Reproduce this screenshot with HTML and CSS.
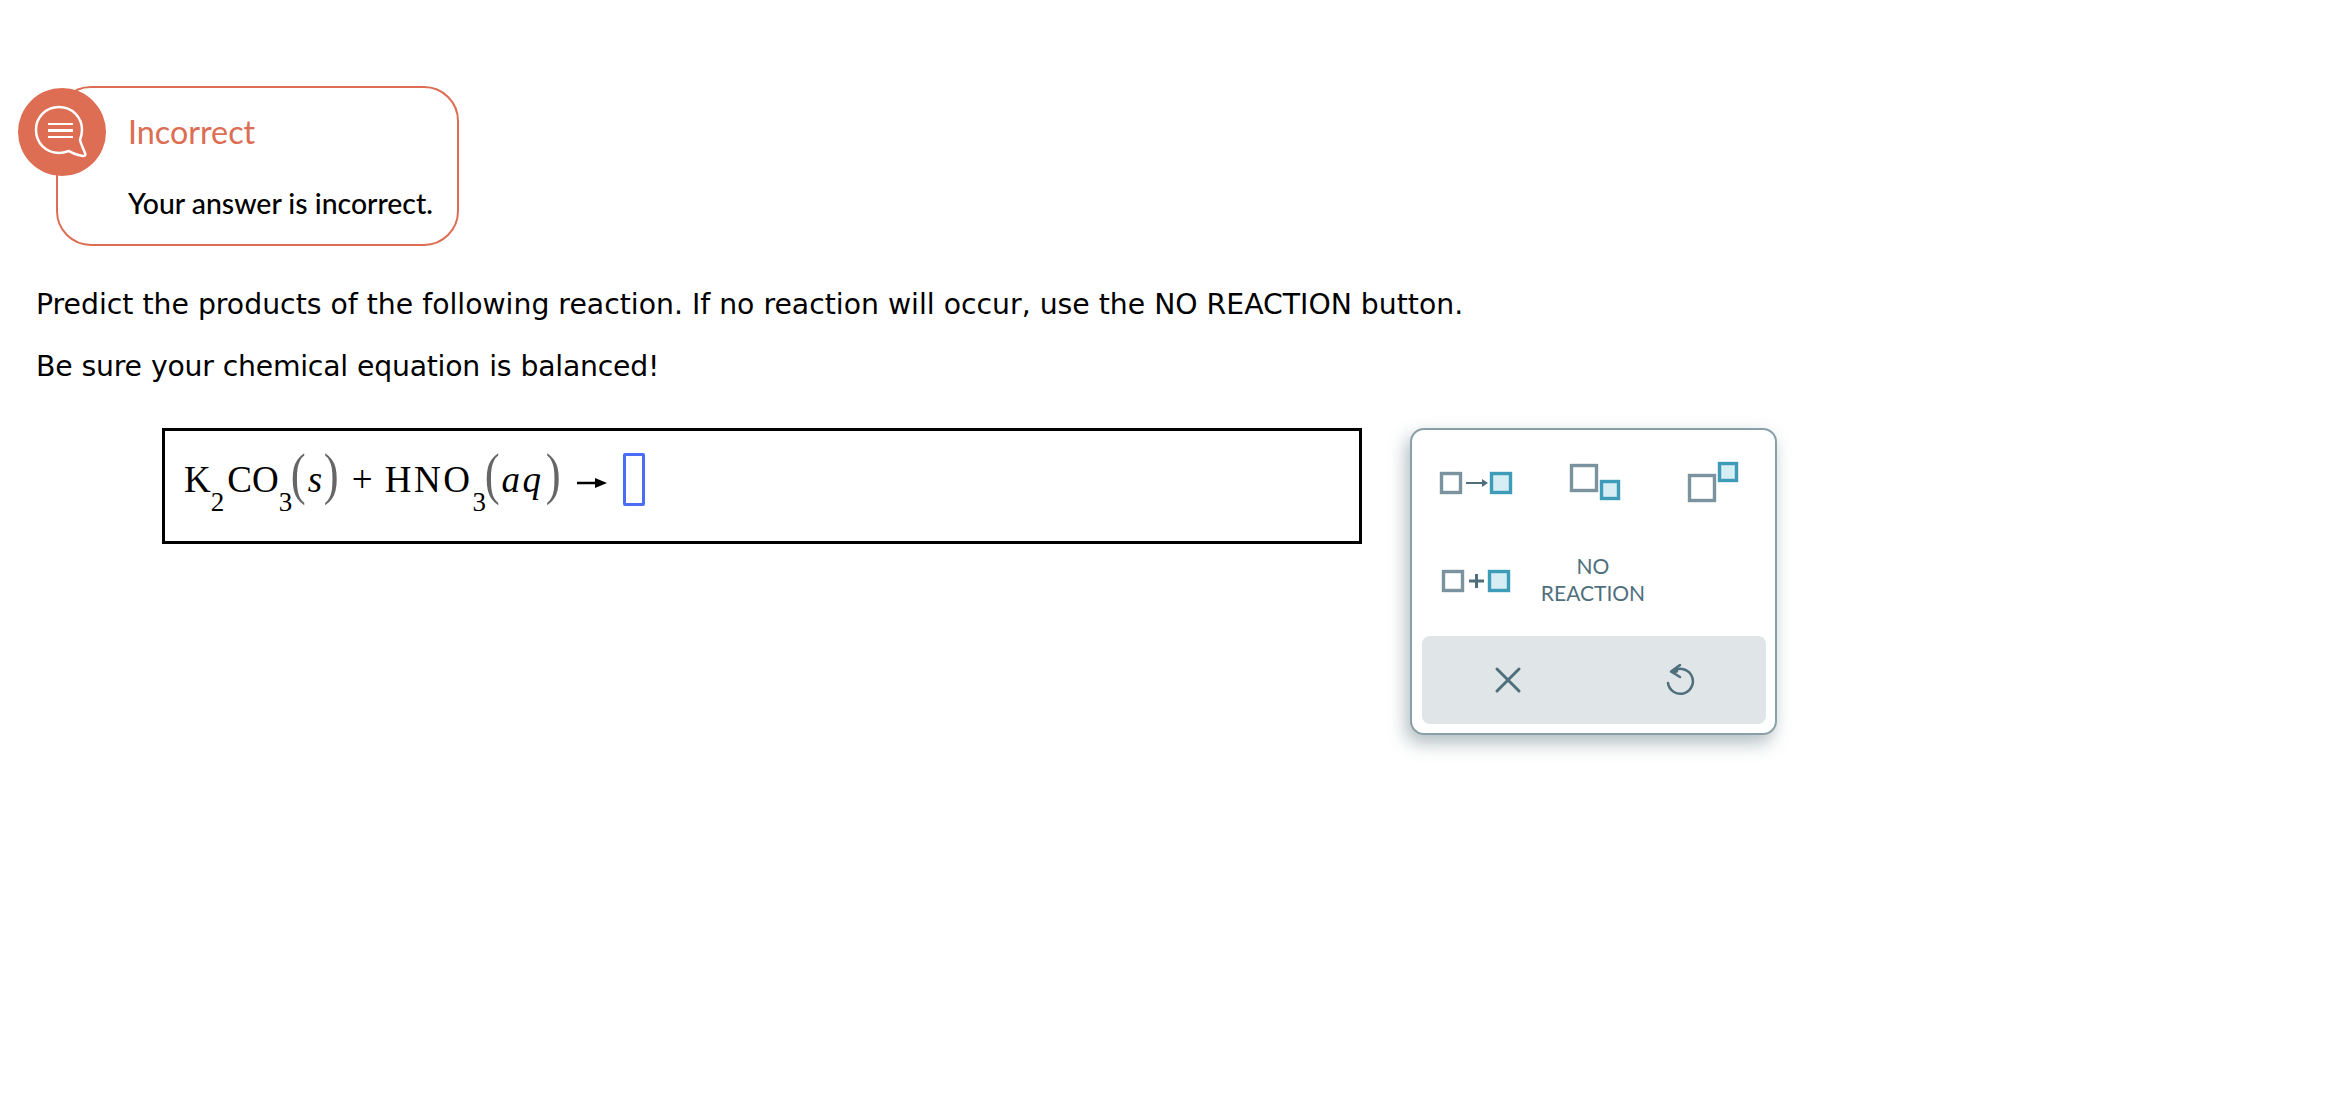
FILE: index.html
```html
<!DOCTYPE html>
<html lang="en">
  <head>
    <meta charset="UTF-8" />
    <title>Predict the products</title>
    <link rel="stylesheet" href="styles.css">
  </head>
  <body>
    <!-- Feedback -->
    <div class="feedback">
      <div class="badge">
        <svg width="88" height="88" viewBox="0 0 88 88" fill="none" stroke="#fff">
          <path d="M41 19C28 19 18 29 18 42C18 55 28 65 41 65C45 65 48 64 51 63C55 66 60 67 65 68C67 68 68 67 67 65C65 60 63 56 62 52C63 49 64 46 64 42C64 29 54 19 41 19Z" stroke-width="2.5" stroke-linejoin="round"/>
          <path d="M30 36H55M30 49H55" stroke-width="2"/>
          <path d="M30 42.500H55" stroke-width="3"/>
        </svg>
      </div>
      <div class="feedbackTitle">Incorrect</div>
      <div class="feedbackText">Your answer is incorrect.</div>
    </div>

    <!-- Question -->
    <p class="prompt first">Predict the products of the following reaction. If no reaction will occur, use the NO REACTION button.</p>
    <p class="prompt second">Be sure your chemical equation is balanced!</p>

    <div class="work">
      <!-- Answer box -->
      <div class="answer"><span>K</span><sub>2</sub><span class="afterSub">CO</span><sub>3</sub><span class="paren">(</span><i>s</i><span class="paren">)</span><span class="plus">+</span><span class="wide">HNO</span><sub>3</sub><span class="paren">(</span><i class="wide">aq</i><span class="paren">)</span><svg class="arrow" width="30" height="12" viewBox="0 0 30 12"><path d="M0 6H22" stroke="#000" stroke-width="2.5"/><path d="M18 1L30 6L18 11Z" fill="#000"/></svg><span class="slot"></span></div>

      <!-- Palette -->
      <div class="palette">
        <div class="tools">
          <button class="tool">
            <svg width="100" height="60" viewBox="0 0 100 60">
              <rect class="box" x="12.500" y="18.500" width="19" height="19"/>
              <path class="mark" d="M37 28H54" stroke-width="2"/>
              <path d="M53 24L59 28L53 32Z" fill="#4f6f7c"/>
              <rect class="blue" x="62.500" y="18.500" width="19" height="19"/>
            </svg>
          </button>
          <button class="tool">
            <svg width="100" height="60" viewBox="0 0 100 60">
              <rect class="box" x="27.500" y="10.500" width="25" height="25"/>
              <rect class="blue" x="57.500" y="26.500" width="17" height="17"/>
            </svg>
          </button>
          <button class="tool">
            <svg width="100" height="60" viewBox="0 0 100 60">
              <rect class="box" x="30.500" y="20.500" width="25" height="25"/>
              <rect class="blue" x="60.500" y="8.500" width="17" height="17"/>
            </svg>
          </button>
          <button class="tool">
            <svg width="100" height="60" viewBox="0 0 100 60">
              <rect class="box" x="14.500" y="20.500" width="19" height="19"/>
              <path class="mark" d="M40 30H55M47.500 23V37" stroke-width="3"/>
              <rect class="blue" x="60.500" y="20.500" width="19" height="19"/>
            </svg>
          </button>
          <button class="tool noReaction">NO<br>REACTION</button>
        </div>
        <div class="actions">
          <button class="action">
            <svg width="28" height="28" viewBox="0 0 28 28" fill="none" stroke="#4f6f7c" stroke-width="3" stroke-linecap="round">
              <path d="M3 3L25 25M25 3L3 25"/>
            </svg>
          </button>
          <button class="action">
            <svg width="30" height="36" viewBox="0 0 30 36" fill="none" stroke="#4f6f7c" stroke-width="2.500" stroke-linecap="round" stroke-linejoin="round">
              <path d="M3 21A12.500 12.500 0 1 0 7 10L12 9.500"/>
              <path d="M15 3L6 9.500L15 15"/>
            </svg>
          </button>
        </div>
      </div>
    </div>
  </body>
</html>
```

FILE: styles.css
```css
* {
  margin: 0;
  padding: 0;
  box-sizing: border-box;
}

body {
  min-height: 100vh;
  background: #fff;
  color: #000;
  font-family: "DejaVu Sans", Verdana, sans-serif;
  padding-top: 86px;
}

/* Feedback */
.feedback {
  position: relative;
  width: 403px;
  height: 160px;
  margin-left: 56px;
  padding: 26px 0 0 70px;
  border: 2px solid #dd6d53;
  border-radius: 35px;
  background: #fff;
  font-family: Lato, sans-serif;
}

.badge {
  position: absolute;
  left: -40px;
  top: 0;
  width: 88px;
  height: 88px;
  border-radius: 50%;
  background: #dd6d53;
}

.feedbackTitle {
  color: #dd6d53;
  font-size: 32.300px;
  line-height: 36px;
}

.feedbackText {
  margin-top: 35px;
  font-size: 28.400px;
  font-weight: 500;
  line-height: 36px;
}

/* Question */
.prompt {
  margin-left: 36px;
  font-size: 28.300px;
  line-height: 36px;
}

.first {
  margin-top: 41px;
}

.second {
  margin-top: 26px;
  letter-spacing: -0.250px;
  word-spacing: 0.500px;
}

.work {
  display: flex;
  align-items: flex-start;
  gap: 48px;
  margin: 43px 0 0 162px;
}

/* Answer box */
.answer {
  width: 1200px;
  height: 116px;
  padding-left: 19px;
  border: 3px solid #000;
  font-family: "Liberation Serif", serif;
  font-size: 37px;
  line-height: 98px;
  white-space: nowrap;
}

.answer span,
.answer i,
.answer sub {
  line-height: 0;
}

.answer sub {
  font-size: 27px;
  vertical-align: -19px;
}

.afterSub {
  margin-left: 3px;
}

.paren {
  display: inline-block;
  margin: 0 -3px;
  color: #666;
  font-size: 56px;
  vertical-align: -1px;
  transform: scaleX(0.8);
}

.answer i {
  margin: 0 3px;
}

.wide {
  letter-spacing: 2.500px;
}

.plus {
  margin: 0 12px 0 14px;
}

.arrow {
  margin: 0 16px 0 18px;
  vertical-align: 3px;
}

.slot {
  display: inline-block;
  width: 22px;
  height: 53px;
  border: 3px solid #4a6cf7;
  border-radius: 2px;
  vertical-align: -14px;
}

/* Palette */
.palette {
  width: 367px;
  height: 307px;
  padding: 7px 9px 9px 10px;
  border: 2px solid #8aa0a8;
  border-radius: 14px;
  background: #fff;
  box-shadow: -4px 8px 18px rgba(60, 90, 100, 0.4);
}

.tools {
  display: grid;
  grid-template-columns: repeat(3, 1fr);
  grid-auto-rows: 96px;
  margin-bottom: 7px;
}

button {
  display: flex;
  align-items: center;
  justify-content: center;
  border: none;
  background: none;
}

.box {
  fill: #fff;
  stroke: #7a939e;
  stroke-width: 3.400;
}

.blue {
  fill: #d5edf3;
  stroke: #3f9cb8;
  stroke-width: 3.400;
}

.mark {
  fill: none;
  stroke: #4f6f7c;
}

.noReaction {
  padding: 0 2px 4px 0;
  color: #4f6f7c;
  font-family: Lato, sans-serif;
  font-size: 21px;
  line-height: 27px;
}

.actions {
  display: flex;
  height: 88px;
  border-radius: 8px;
  background: #e0e5e8;
}

.action {
  flex: 1;
}
```
